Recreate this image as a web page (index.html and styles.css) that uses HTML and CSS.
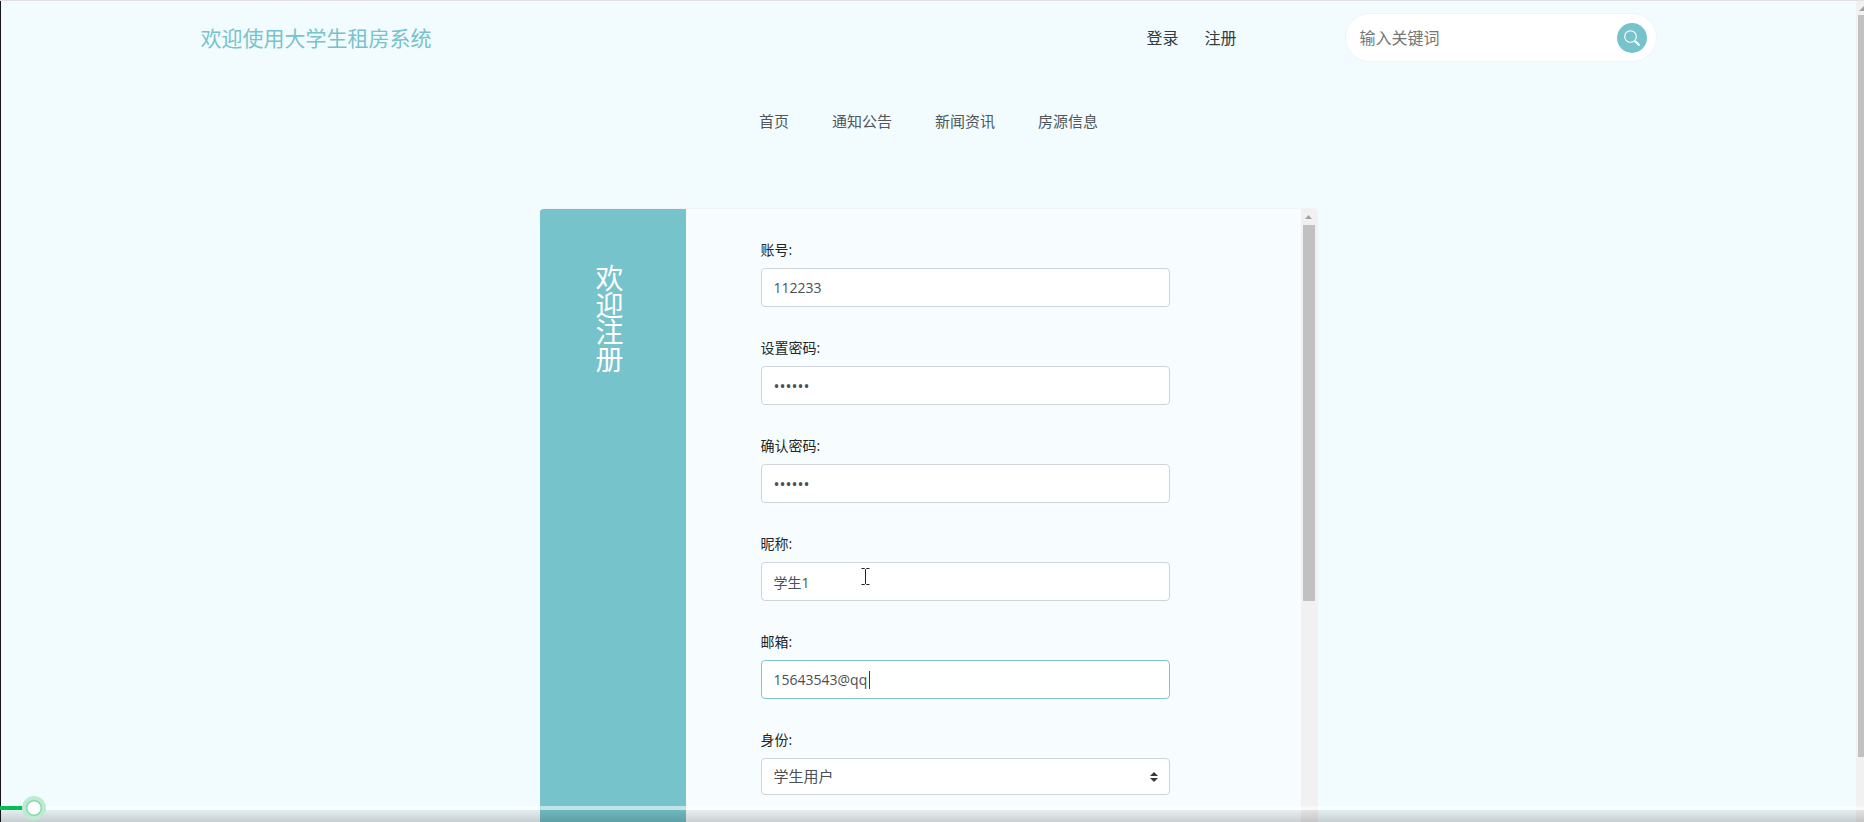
FILE: index.html
```html
<!DOCTYPE html>
<html lang="zh-CN">
<head>
<meta charset="utf-8">
<title>大学生租房系统</title>
<link rel="stylesheet" href="styles.css">
</head>
<body>
<div class="window">
  <div class="page">
    <header class="header">
      <h1 class="brand">欢迎使用大学生租房系统</h1>
      <div class="account">
        <a class="account-link" href="#">登录</a>
        <a class="account-link" href="#">注册</a>
      </div>
      <form class="search">
        <input class="search-input" type="text" placeholder="输入关键词" aria-label="输入关键词">
        <button class="search-button" type="button" aria-label="搜索">
          <svg width="16" height="16" viewBox="0 0 16 16" fill="none" stroke="#fff" stroke-linecap="round">
            <circle cx="6.5" cy="6.5" r="5.8" stroke-width="1.1"/>
            <path d="M10.8 10.8L12 12" stroke-width="1.2"/>
            <path d="M12 12L14.8 14.8" stroke-width="2.2"/>
          </svg>
        </button>
      </form>
    </header>
    <nav class="nav">
      <a href="#">首页</a>
      <a href="#">通知公告</a>
      <a href="#">新闻资讯</a>
      <a href="#">房源信息</a>
    </nav>
    <main class="card">
      <aside class="card-side"><h2 class="card-title">欢迎注册</h2></aside>
      <form class="form">
        <div class="field">
          <label for="account">账号:</label>
          <input class="control" id="account" type="text" value="112233">
        </div>
        <div class="field">
          <label for="password">设置密码:</label>
          <input class="control control-password" id="password" type="password" value="112233">
        </div>
        <div class="field">
          <label for="confirm">确认密码:</label>
          <input class="control control-password" id="confirm" type="password" value="112233">
        </div>
        <div class="field">
          <label for="nickname">昵称:</label>
          <input class="control" id="nickname" type="text" value="学生1">
          <svg class="pointer" width="9" height="17" viewBox="0 0 9 17" fill="none" stroke="#222" stroke-width="1">
            <path d="M0.5 0.5H3.5L4.5 1.5L5.5 0.5H8.5M4.5 1.5V15.5M0.5 16.5H3.5L4.5 15.5L5.5 16.5H8.5"/>
          </svg>
        </div>
        <div class="field">
          <label for="email">邮箱:</label>
          <input class="control control-active" id="email" type="text" value="15643543@qq">
          <span class="caret"></span>
        </div>
        <div class="field">
          <label for="role">身份:</label>
          <select class="control control-select" id="role"><option>学生用户</option></select>
          <svg class="select-arrows" width="8" height="10" viewBox="0 0 8 10" fill="#343a40"><path d="M4 0L8 4H0ZM4 10L0 6H8Z"/></svg>
        </div>
      </form>
      <div class="scrollbar">
        <svg width="7" height="4" viewBox="0 0 7 4" fill="#a3a3a3"><path d="M3.5 0L7 4H0Z"/></svg>
        <div class="scroll-track"><div class="scroll-thumb"></div></div>
      </div>
    </main>
  </div>
  <div class="page-scrollbar">
    <svg width="5" height="5" viewBox="0 0 5 5" fill="#a3a3a3"><path d="M0 5L5 0V5Z"/></svg>
    <div class="page-track"><div class="page-thumb"></div></div>
  </div>
</div>
<div class="player">
  <div class="player-line"><div class="player-played"></div></div>
  <div class="player-knob"></div>
</div>
</body>
</html>
```
FILE: styles.css
```css
* { box-sizing: border-box; }

body {
  margin: 0;
  background: #f2fcff;
  color: #212529;
  font-family: "Open Sans", "Noto Sans CJK SC", sans-serif;
}

a { color: inherit; text-decoration: none; }

.window {
  display: flex;
  height: 100vh;
  overflow: hidden;
  border-top: 1px solid #e2e0e4;
}

.page {
  flex: 1;
  min-width: 0;
  display: flex;
  flex-direction: column;
  border-left: 1px solid #17171b;
}

.header {
  width: 100%;
  max-width: 1456px;
  margin: 0 auto;
  padding-top: 12px;
  display: flex;
  align-items: center;
}

.brand {
  margin: 0 auto 0 0;
  font-size: 21px;
  font-weight: 400;
  line-height: 32px;
  color: #76c3cb;
}

.account {
  display: flex;
  gap: 26px;
  font-size: 16px;
  line-height: 24px;
  color: #343a40;
}

.search {
  width: 312px;
  height: 49px;
  margin-left: 108px;
  padding: 0 9px 0 14px;
  display: flex;
  align-items: center;
  background: #fff;
  border: 1px solid #f1f3f6;
  border-radius: 25px;
}

.search-input {
  flex: 1;
  min-width: 0;
  padding: 0;
  border: 0;
  outline: 0;
  background: none;
  font: inherit;
  font-size: 16px;
}

.search-input::placeholder { color: #757575; }

.search-button {
  width: 30px;
  height: 30px;
  padding: 0;
  display: grid;
  place-items: center;
  border: 0;
  border-radius: 50%;
  background: #76c3cb;
}

.nav {
  margin: 47px 0 75px;
  display: flex;
  justify-content: center;
  gap: 43px;
  font-size: 15px;
  line-height: 24px;
  color: #50565b;
}

.card {
  flex: 1;
  width: 778px;
  max-width: 100%;
  min-height: 0;
  margin: 0 auto;
  display: flex;
  overflow: hidden;
  background: #f7fdff;
  border-top: 1px solid #f1f3f5;
  border-radius: 4px 4px 0 0;
}

.card-side {
  width: 146px;
  padding: 56px 6px 0 0;
  display: flex;
  justify-content: center;
  align-items: flex-start;
  background: #76c3cb;
}

.card-title {
  width: 28px;
  margin: 0;
  font-size: 28px;
  font-weight: 400;
  line-height: 27px;
  color: #fff;
  word-break: break-all;
}

.form {
  flex: 1;
  padding: 30px 131px 0 75px;
  display: flex;
  flex-direction: column;
  gap: 30px;
}

.field {
  position: relative;
  display: flex;
  flex-direction: column;
  gap: 8px;
  font-size: 14px;
  line-height: 21px;
}

.control {
  width: 100%;
  height: 39px;
  padding: 0 12px;
  font: inherit;
  color: #495057;
  background: #fff;
  border: 1px solid #ced4da;
  border-radius: 4px;
  outline: 0;
}

.control-active { border-color: #80c5cc; }

.control-password { font-size: 16px; }

.control-select {
  height: 37px;
  font-size: 15px;
  appearance: none;
}

.caret {
  position: absolute;
  right: 300px;
  bottom: 10px;
  width: 1px;
  height: 18px;
  background: #343a40;
}

.pointer {
  position: absolute;
  left: 100px;
  bottom: 16px;
}

.select-arrows {
  position: absolute;
  right: 12px;
  bottom: 13px;
}

.scrollbar {
  width: 17px;
  padding: 6px 3px 0 2px;
  display: flex;
  flex-direction: column;
  align-items: center;
  gap: 6px;
  background: #f1f1f1;
}

.scroll-track { flex: 1; width: 100%; }
.scroll-thumb { height: 63%; background: #c1c1c1; }

.page-scrollbar {
  width: 8px;
  padding-top: 5px;
  display: flex;
  flex-direction: column;
  align-items: flex-end;
  gap: 4px;
  background: #f1f1f1;
}

.page-track { flex: 1; width: 6px; }
.page-thumb { height: 92%; background: #c1c1c1; }

.player {
  position: fixed;
  left: 0;
  right: 0;
  bottom: 0;
  height: 16px;
}

.player-line {
  height: 4px;
  background: rgba(255, 255, 255, 0.55);
}

.player::after {
  content: "";
  display: block;
  height: 12px;
  background: linear-gradient(rgba(0, 0, 0, 0.06), rgba(0, 0, 0, 0.18));
}

.player-played {
  width: 34px;
  height: 4px;
  background: #07bb55;
}

.player-knob {
  position: absolute;
  left: 22px;
  bottom: 2px;
  width: 24px;
  height: 24px;
  border: 4px solid #bfead2;
  border-radius: 50%;
  background: radial-gradient(circle, #fff 6px, #83d9a9 7px);
}
```
